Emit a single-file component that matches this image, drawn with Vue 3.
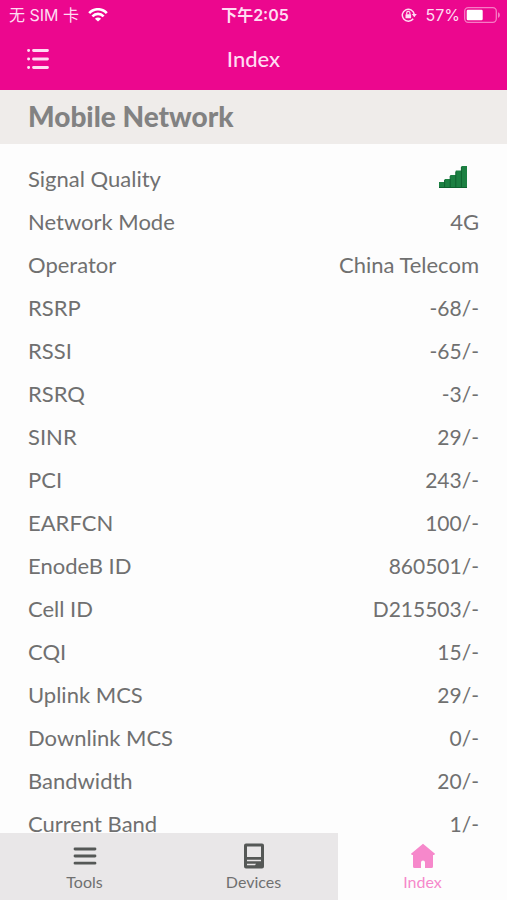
<script setup>
import { ref } from 'vue'

const rows = [
  ['Signal Quality', null],
  ['Network Mode', '4G'],
  ['Operator', 'China Telecom'],
  ['RSRP', '-68/-'],
  ['RSSI', '-65/-'],
  ['RSRQ', '-3/-'],
  ['SINR', '29/-'],
  ['PCI', '243/-'],
  ['EARFCN', '100/-'],
  ['EnodeB ID', '860501/-'],
  ['Cell ID', 'D215503/-'],
  ['CQI', '15/-'],
  ['Uplink MCS', '29/-'],
  ['Downlink MCS', '0/-'],
  ['Bandwidth', '20/-'],
  ['Current Band', '1/-'],
]
const tabs = ['Tools', 'Devices', 'Index']
const active = ref('Index')
</script>

<template>
  <div class="screen">
    <header class="top">
      <div class="status">
        <div class="carrier">
          <span>无 SIM 卡</span>
          <svg width="20" height="14" viewBox="0 0 20 14" fill="none" stroke="currentColor" stroke-width="2.6">
            <path d="M1.2 5.2C6-.1 14-.1 18.8 5.2" />
            <path d="M4.4 8.4c3.2-3.4 8-3.4 11.2 0" />
            <path d="M10 13.6 6.9 10.7c1.7-1.7 4.5-1.7 6.2 0z" fill="currentColor" stroke="none" />
          </svg>
        </div>
        <span class="time">下午2:05</span>
        <div class="power">
          <svg width="16" height="14" viewBox="0 0 16 14" fill="none" stroke="currentColor" stroke-width="1.5">
            <path d="M12.2 10.7A6 6 0 1 1 13.2 6" />
            <path d="M10.8 6h5l-2.5 3.2z" fill="currentColor" stroke="none" />
            <path d="M5.7 6.5V5a1.6 1.6 0 0 1 3.2 0v1.5" stroke-width="1.2" />
            <rect x="4.5" y="6.2" width="5.6" height="4" rx=".5" fill="currentColor" stroke="none" />
          </svg>
          <span>57%</span>
          <svg width="37" height="16" viewBox="0 0 37 16" fill="none">
            <rect x=".7" y=".7" width="31.6" height="14.6" rx="3.5" stroke="currentColor" stroke-opacity=".55" stroke-width="1.3" />
            <rect x="2.7" y="2.7" width="16" height="10.6" rx="1.2" fill="#fff" />
            <path d="M34 5.2c2.500.8 2.500 4.800 0 5.600z" fill="currentColor" fill-opacity=".55" />
          </svg>
        </div>
      </div>
      <div class="nav">
        <button class="menu" type="button" aria-label="Menu">
          <svg width="22" height="22" viewBox="0 0 22 22" fill="none" stroke="currentColor" stroke-width="2.8" stroke-linecap="round">
            <path d="M6.5 2.5h14M6.5 11h14M6.5 19.5h14M1.500 2.500h.2M1.500 11h.2M1.500 19.500h.2" />
          </svg>
        </button>
        <h1>Index</h1>
      </div>
    </header>

    <main>
      <h2>Mobile Network</h2>
      <dl>
        <div v-for="[label, value] in rows" :key="label" class="row">
          <dt>{{ label }}</dt>
          <dd v-if="value" :class="{ reading: value.includes('/') }">{{ value }}</dd>
          <dd v-else class="signal">
            <svg width="28" height="22" viewBox="0 0 28 22" role="img" aria-label="Full signal">
              <path d="M0 22v-6h5.600v-3h5.600V9h5.600V4.500h5.600V0H28v22z" fill="#1c8042" />
              <path d="M5.600 14v8M11.200 10v12M16.800 5.500V22M22.400 1v21M0 21.500h28" stroke="#0f6230" stroke-width="1" />
            </svg>
          </dd>
        </div>
      </dl>
    </main>

    <nav class="tabs">
      <button v-for="tab in tabs" :key="tab" type="button" :class="{ active: active === tab }" @click="active = tab">
        <svg v-if="tab === 'Tools'" width="24" height="26" viewBox="0 0 24 26" fill="none" stroke="currentColor" stroke-width="2.8" stroke-linecap="round">
          <path d="M2 6h20M2 13h20M2 20.200h20" />
        </svg>
        <svg v-else-if="tab === 'Devices'" width="22" height="26" viewBox="0 0 22 26">
          <path fill="currentColor" fill-rule="evenodd" d="M3 .5h16a2 2 0 0 1 2 2v21a2 2 0 0 1-2 2H3a2 2 0 0 1-2-2v-21a2 2 0 0 1 2-2zM4 3.500V14h14V3.500zM4 16.800v1.500h14v-1.500zM4 20.700v1.500h8l1-1.500z" />
        </svg>
        <svg v-else width="24" height="26" viewBox="0 0 24 26">
          <path fill="currentColor" d="M12 .8 24 10.800l-.8 1.200H22v11.500a1.500 1.500 0 0 1-1.500 1.500H14v-5.500a2 2 0 0 0-4 0V25H3.500A1.500 1.500 0 0 1 2 23.500V12H.8L0 10.800z" />
        </svg>
        <span>{{ tab }}</span>
      </button>
    </nav>
  </div>
</template>

<style>
body {
  background: #fdfdfd;
}
</style>

<style scoped>
.screen {
  display: flex;
  flex-direction: column;
  height: 100vh;
  font-family: Lato, "Noto Sans CJK SC", sans-serif;
  color: #707070;
  background: #fdfdfd;
}
svg {
  display: block;
  flex: none;
}
button {
  border: 0;
  padding: 0;
  background: none;
  font: inherit;
  color: inherit;
}
.top {
  flex: none;
  background: #ec078e;
  color: #ffdcf2;
}
.status {
  display: grid;
  grid-template-columns: 1fr auto 1fr;
  align-items: center;
  height: 30px;
  padding: 0 6px 0 9px;
  font-family: Inter, "Noto Sans CJK SC", sans-serif;
  font-size: 16px;
  line-height: 20px;
}
.carrier,
.power {
  display: flex;
  align-items: center;
  gap: 9px;
}
.carrier svg {
  color: #fff;
}
.power {
  justify-content: flex-end;
}
.power span {
  margin-right: -5px;
}
.time {
  font-weight: 600;
}
.nav {
  display: grid;
  grid-template-columns: 1fr auto 1fr;
  align-items: center;
  height: 60px;
  padding: 0 27px 2px;
  box-sizing: border-box;
}
.menu {
  justify-self: start;
}
h1 {
  margin: 0;
  font-size: 22px;
  font-weight: 500;
  line-height: 28px;
}
main {
  flex: 1;
  min-height: 0;
  overflow: hidden;
}
h2 {
  margin: 0;
  padding: 8px 28px 10px;
  background: #efecea;
  color: #828282;
  font-size: 28px;
  font-weight: 900;
  line-height: 36px;
}
dl {
  margin: 0;
  padding: 13px 28px;
  font-size: 22px;
}
.row {
  display: flex;
  align-items: center;
  justify-content: space-between;
  height: 43px;
}
dd {
  margin: 0;
}
.reading {
  font-size: 21px;
}
.signal {
  padding: 0 12px 4px 0;
}
.tabs {
  flex: none;
  display: grid;
  grid-template-columns: repeat(3, 1fr);
  height: 67px;
}
.tabs button {
  display: flex;
  flex-direction: column;
  align-items: center;
  gap: 3px;
  padding-top: 10px;
  background: #e9e7e8;
  font-size: 16px;
  line-height: 20px;
}
.tabs svg {
  color: #555856;
}
.tabs .active {
  background: #fdfdfd;
}
.tabs .active,
.tabs .active svg {
  color: #f688cb;
}
</style>
